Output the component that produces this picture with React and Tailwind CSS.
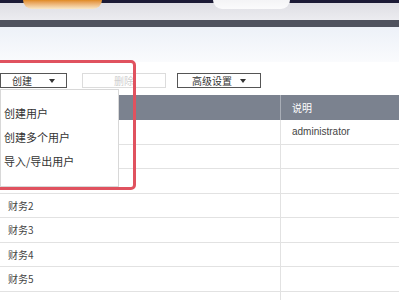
import React from "react"

const rows = [
  { name: "", desc: "administrator" },
  { name: "", desc: "" },
  { name: "", desc: "" },
  { name: "财务2", desc: "" },
  { name: "财务3", desc: "" },
  { name: "财务4", desc: "" },
  { name: "财务5", desc: "" },
  { name: "", desc: "" },
]

function Caret() {
  return (
    <svg width="6" height="4" viewBox="0 0 6 4" className="inline-block">
      <path d="M0 0 L6 0 L3 4 Z" fill="#333" />
    </svg>
  )
}

export default function App() {
  return (
    <div
      className="relative w-[399px] h-[300px] overflow-hidden bg-white text-[#444]"
      style={{ fontFamily: '"Noto Sans CJK SC", "Noto Sans", sans-serif' }}
    >
      {/* photographed monitor top */}
      <div className="relative h-[20px] bg-gradient-to-b from-[#dcdce2] to-[#ececf0]">
        <div className="h-[3px] bg-[#1c1b36]" />
        <div className="absolute left-[23px] top-0 w-[79px] h-[9px] rounded-b-[40px] bg-gradient-to-b from-[#e08a1e] to-[#f8e8c8]" />
        <div className="absolute left-[213px] top-0 w-[77px] h-[9px] rounded-b-[40px] bg-gradient-to-b from-[#f4f4f6] to-[#fbfbfc]" />
      </div>
      <div className="h-[7px] bg-[#4f525e]" />
      <div className="h-[35px] bg-gradient-to-b from-[#edf1f8] to-[#fafbfd]" />

      {/* toolbar */}
      <div className="h-[33px] pt-[11px] flex items-start text-[10px] text-[#333]">
        <div className="w-[67px] h-[15px] border border-[#555] flex items-center justify-between pl-[11px] pr-[11px]">
          <span className="leading-none">创建</span>
          <Caret />
        </div>
        <div className="ml-[15px] w-[84px] h-[15px] border border-[#dcdcdc] flex items-center justify-center text-[#d0d0d0]">
          <span className="leading-none">删除</span>
        </div>
        <div className="ml-[11px] w-[84px] h-[15px] border border-[#555] flex items-center justify-center gap-[8px]">
          <span className="leading-none">高级设置</span>
          <Caret />
        </div>
      </div>

      {/* table */}
      <div className="flex h-[25px] bg-[#7b828f] text-white text-[10px]">
        <div className="w-[280px]" />
        <div className="flex-1 border-l border-[#a9aeb7] flex items-center pl-[11px]">说明</div>
      </div>
      {rows.map((r, i) => (
        <div key={i} className="flex h-[24.5px] border-b border-[#e2e2e2] text-[10px]">
          <div className="w-[280px] flex items-center pl-[8px]">{r.name}</div>
          <div
            className="flex-1 border-l border-[#e2e2e2] flex items-center pl-[11px]"
            style={{ fontFamily: '"Liberation Sans", Arial, sans-serif' }}
          >
            {r.desc}
          </div>
        </div>
      ))}

      {/* dropdown menu */}
      <div className="absolute left-0 top-[89px] w-[119px] h-[98px] bg-white border border-[#d8d8d8] text-[11px] text-[#333] pl-[3px] pt-[15px] flex flex-col gap-[8px]">
        <div className="leading-[16px]">创建用户</div>
        <div className="leading-[16px]">创建多个用户</div>
        <div className="leading-[16px]">导入/导出用户</div>
      </div>

      {/* annotation box */}
      <div className="absolute left-[-10px] top-[60px] w-[146px] h-[130px] border-[3px] border-[#e0525f] rounded-[5px]" />
    </div>
  )
}
